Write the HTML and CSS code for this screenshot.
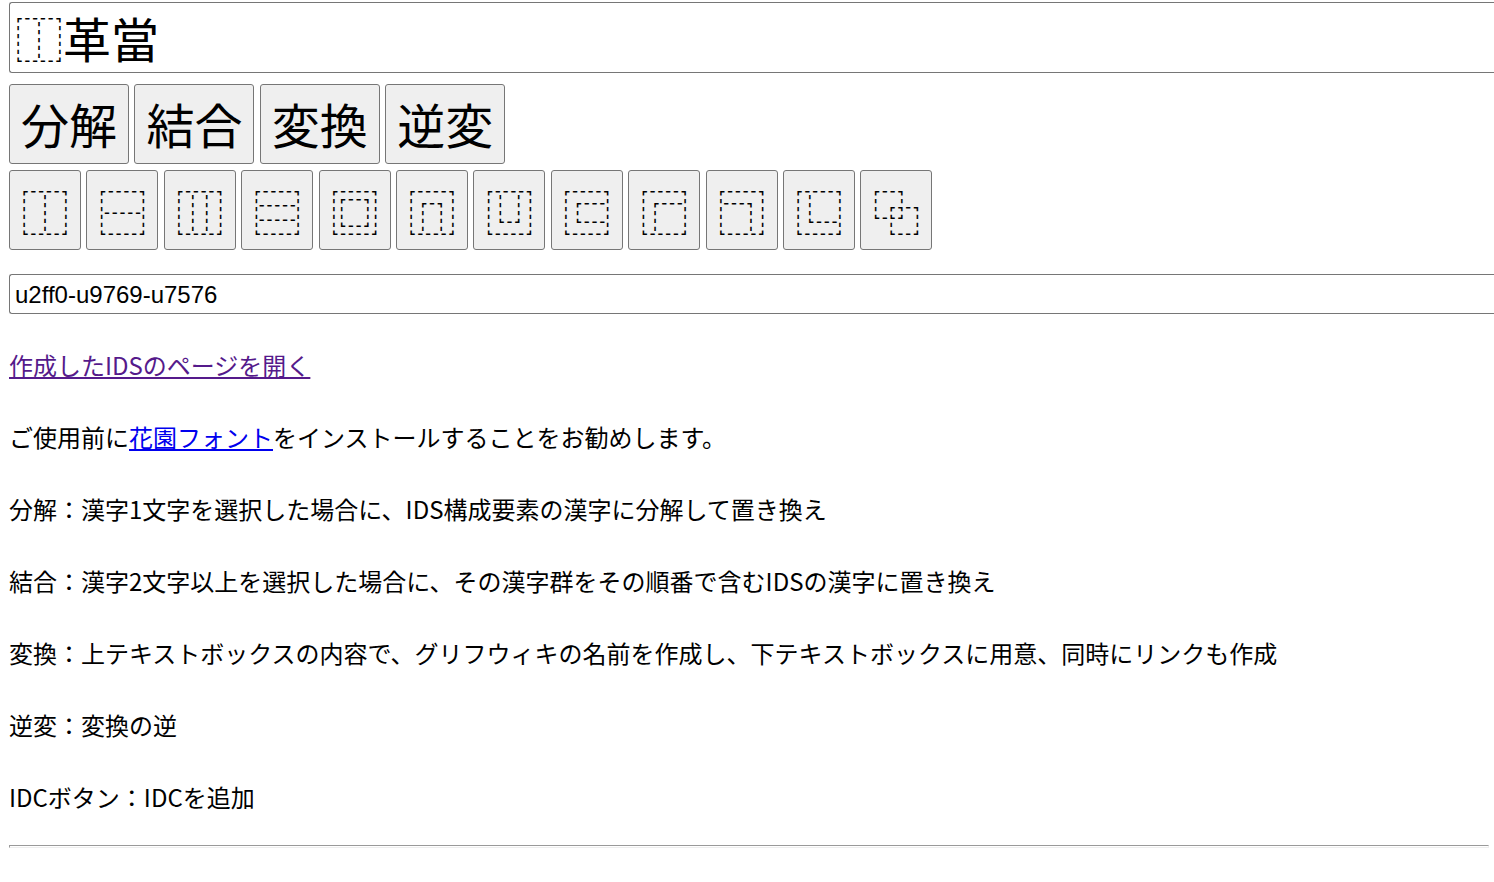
FILE: index.html
```html
<!DOCTYPE html>
<html lang="ja">
<head>
<meta charset="UTF-8">
<title>IDS</title>
<link rel="stylesheet" href="styles.css">
</head>
<body>
<input type="text" class="ids" value="⿰革當">
<div class="buttons commands">
<button>分解</button>
<button>結合</button>
<button>変換</button>
<button>逆変</button>
</div>
<div class="buttons">
<button>⿰</button>
<button>⿱</button>
<button>⿲</button>
<button>⿳</button>
<button>⿴</button>
<button>⿵</button>
<button>⿶</button>
<button>⿷</button>
<button>⿸</button>
<button>⿹</button>
<button>⿺</button>
<button>⿻</button>
</div>
<input type="text" class="name" value="u2ff0-u9769-u7576">
<p><a class="visited" href="#">作成したIDSのページを開く</a></p>
<p>ご使用前に<a href="#">花園フォント</a>をインストールすることをお勧めします。</p>
<p>分解：漢字1文字を選択した場合に、IDS構成要素の漢字に分解して置き換え</p>
<p>結合：漢字2文字以上を選択した場合に、その漢字群をその順番で含むIDSの漢字に置き換え</p>
<p>変換：上テキストボックスの内容で、グリフウィキの名前を作成し、下テキストボックスに用意、同時にリンクも作成</p>
<p>逆変：変換の逆</p>
<p>IDCボタン：IDCを追加</p>
<hr>
</body>
</html>
```
FILE: styles.css
```css
body {
    margin: 2px 0 0 9px;
    font-family: "Noto Sans CJK JP", sans-serif;
    font-size: 24px;
    line-height: 48px;
}
input {
    display: block;
    box-sizing: border-box;
    width: 100%;
    border: 1px solid #767676;
    border-right: none;
    border-radius: 3px 0 0 3px;
}
.ids {
    height: 71px;
    padding: 0 5px 2px;
    font-family: "Noto Sans CJK JP", sans-serif;
    font-size: 48px;
    margin-bottom: 11px;
}
.name {
    height: 40px;
    margin-top: 24px;
    margin-bottom: 27px;
    padding: 2px 5px 0;
    font-family: "Liberation Sans", Arial, sans-serif;
    font-size: 24px;
}
.buttons {
    display: flex;
    gap: 5.4px;
    margin-bottom: 6px;
}
button {
    box-sizing: border-box;
    height: 80px;
    padding: 0 11px;
    border: 1px solid #767676;
    border-radius: 3px;
    background-color: #efefef;
    color: #000;
    font-family: "Noto Sans CJK JP", sans-serif;
    font-size: 48px;
}
.commands button {
    padding-bottom: 2px;
}
p {
    margin: 24px 0;
}
a {
    color: #0000ee;
}
a.visited {
    color: #551a8b;
}
hr {
    height: 1px;
    margin: 0 5px 0 0;
    border: 1px solid;
    border-color: #9a9a9a #eee #eee #9a9a9a;
}
```
